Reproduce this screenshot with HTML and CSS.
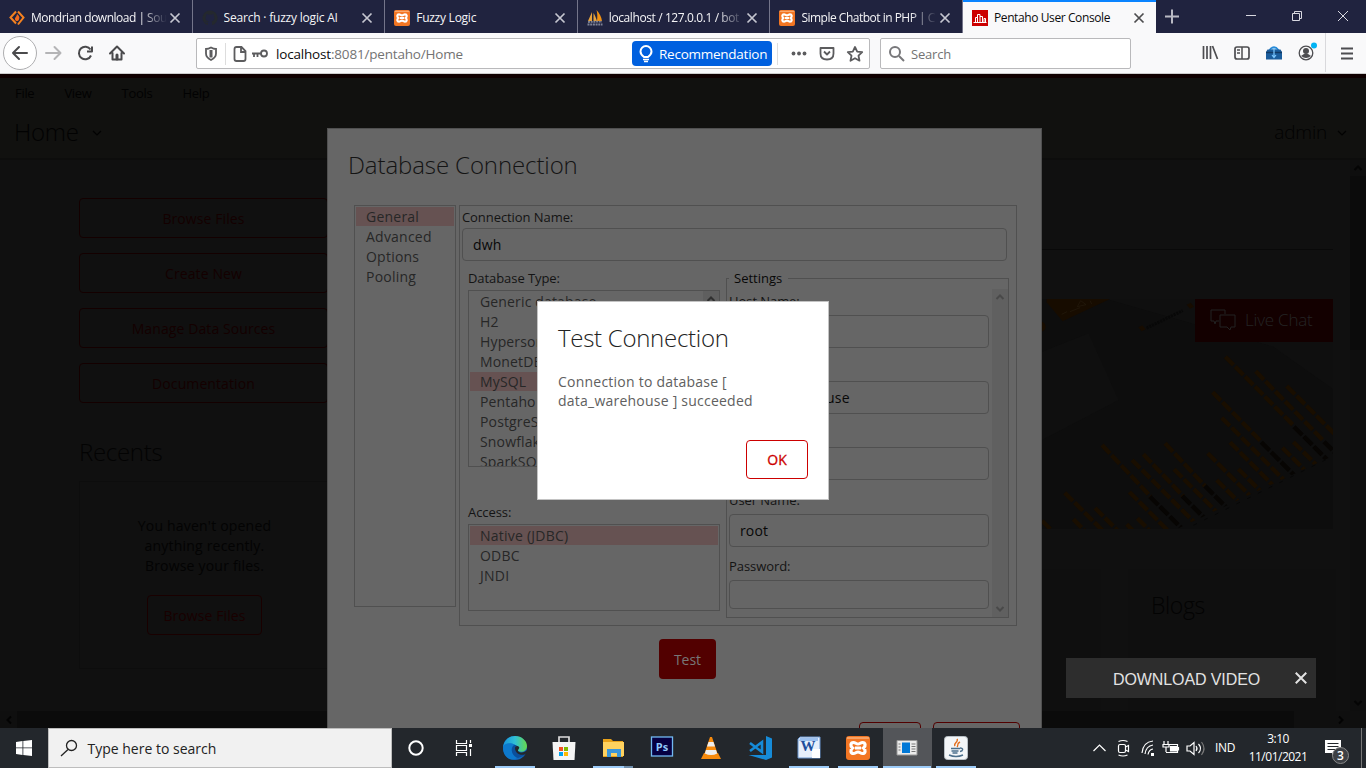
FILE: index.html
```html
<!DOCTYPE html>
<html lang="en">
<head>
<meta charset="utf-8">
<title>Pentaho User Console</title>
<link rel="stylesheet" href="styles.css">
</head>
<body>
<svg class="defs" width="0" height="0">
  <symbol id="close" viewBox="0 0 12 12"><path d="M1.5 1.5l9 9M10.5 1.5l-9 9" fill="none" stroke="currentColor" stroke-width="1.7"/></symbol>
  <symbol id="xampp" viewBox="0 0 24 24"><rect width="24" height="24" rx="3" fill="#f37623"/><path d="M1 2h22" stroke="#f9b27d" stroke-width="1.5"/><path d="M7.5 6.5c-3 0-3.5 3.500-1 5.500-2.500 2-2 5.500 1 5.500 2 0 2.500-1.500 4.500-1.500s2.500 1.500 4.500 1.500c3 0 3.500-3.500 1-5.500 2.500-2 2-5.500-1-5.500-2 0-2.500 1.500-4.500 1.500S9.500 6.500 7.500 6.500z" fill="none" stroke="#fff" stroke-width="3.2"/><path d="M9 12h6" stroke="#fff" stroke-width="3"/></symbol>
  <symbol id="up" viewBox="0 0 10 8"><path d="M1.500 6L5 2.500 8.500 6" fill="none" stroke="currentColor" stroke-width="2"/></symbol>
  <symbol id="down" viewBox="0 0 10 8"><path d="M1.500 2L5 5.500 8.500 2" fill="none" stroke="currentColor" stroke-width="2"/></symbol>
  <symbol id="thin" viewBox="0 0 10 8"><path d="M1 2L5 6 9 2" fill="none" stroke="currentColor" stroke-width="1.200"/></symbol>
</svg>

<div class="tabs">
  <div class="tab">
    <svg class="fav" viewBox="0 0 16 16"><path d="M7 1.500L1.500 7.500 7 13.500M9 1.500l5.500 6L9 14.500" fill="none" stroke="#f58220" stroke-width="2"/><path d="M8 4c2 2 3 3 2 5.500-1 2-3 2-4 0-.500-2 1.500-2 2-5.500z" fill="#f26b1d"/></svg>
    <span class="tab-title fade t1">Mondrian download | Sou</span><svg class="x"><use href="#close"/></svg>
  </div>
  <div class="tab">
    <svg class="fav" viewBox="0 0 16 16"><path d="M8 .5a7.500 7.500 0 0 0-2.500 14.600c.5 0 .5-.2.5-.5v-1.500c-2 .4-2.500-1-2.800-1.500.8-.2 1.500 1.300 2.800.8.1-.5.300-.8.500-1C4.500 11 3.500 10 3.500 8c0-1 .3-1.600.8-2.100-.1-.500-.2-1 .1-1.900.9 0 1.600.6 2 .8 1-.300 2.200-.3 3.200 0 .4-.2 1.100-.8 2-.8.3.900.2 1.400.1 1.900.5.5.8 1.100.8 2.100 0 2-1 3-3 3.400.4.300.5.800.5 1.500v1.700c0 .3 0 .5.500.5A7.500 7.500 0 0 0 8 .5z" fill="#24282e"/></svg>
    <span class="tab-title t2">Search · fuzzy logic AI</span><svg class="x"><use href="#close"/></svg>
  </div>
  <div class="tab">
    <svg class="fav"><use href="#xampp"/></svg>
    <span class="tab-title t3">Fuzzy Logic</span><svg class="x"><use href="#close"/></svg>
  </div>
  <div class="tab">
    <svg class="fav" viewBox="0 0 16 16"><path d="M5 2L1 11h4zM6.500 3v8h3.500C9 8 8 5 6.500 3z" fill="#e8a33c"/><path d="M9.500 0c3 3 5 7 5.500 11h-5C10.500 7 10.500 3 9.500 0z" fill="#f29111"/><path d="M1 12l14-.5M.5 14.500h15" stroke="#7d8296" stroke-width="1.800" stroke-dasharray="2 .7"/></svg>
    <span class="tab-title fade t4">localhost / 127.0.0.1 / bot</span><svg class="x"><use href="#close"/></svg>
  </div>
  <div class="tab">
    <svg class="fav"><use href="#xampp"/></svg>
    <span class="tab-title fade t5">Simple Chatbot in PHP | C</span><svg class="x"><use href="#close"/></svg>
  </div>
  <div class="tab active">
    <svg class="fav" viewBox="0 0 16 16"><rect width="16" height="18" fill="#c00"/><path d="M1.500 12.500h13M3.500 12V7.500h2V12M5.500 12V4.500h2.500V12M8 6.500h2.500V12M12 12V8.500h1.500V12" fill="none" stroke="#fff"/></svg>
    <span class="tab-title t6">Pentaho User Console</span><svg class="x"><use href="#close"/></svg>
  </div>
  <svg class="winctl" viewBox="0 0 210 33"><g fill="none" stroke="#d8d8e0"><path d="M9 16.500h14M16 9.500v14" stroke-width="2" stroke="#b9bac4"/><path d="M90 15.500h10M136.500 13.500h7v7h-7zM138.500 13v-1.500h7v7H144M182 11l10 10M192 11l-10 10"/></g></svg>
</div>

<div class="toolbar">
  <div class="nav">
    <svg width="130" height="40" viewBox="0 0 130 40">
      <circle cx="20" cy="20" r="16.500" fill="#fff" stroke="#aeaeb0"/>
      <g fill="none" stroke="#4a4a4c" stroke-width="2" stroke-linejoin="round" stroke-linecap="round">
        <path d="M27 20H13M19 14l-6 6 6 6"/>
        <path d="M46 20h14M54.500 14l6 6-6 6" stroke="#b4b4b6"/>
        <path d="M90.500 16.500A6.300 6.300 0 1 0 91 22.500M92 13.500v5h-5" stroke-linecap="butt"/>
        <path d="M110 20.500l7-7 7 7M112.500 20v6.500h9V20"/><path d="M117 26v-4" stroke-width="3"/>
      </g>
    </svg>
  </div>
  <div class="urlbar">
    <svg class="urlicons" viewBox="0 0 78 28">
      <g fill="none" stroke="#5c5c5e" stroke-width="1.800">
        <path d="M9 9q2.500 0 5-1.500 2.500 1.500 5 1.500v4.500q0 4-5 6.500-5-2.500-5-6.500z"/><path d="M14 10v7.500" stroke-width="3"/>
        <path d="M28.500 3v22" stroke="#ddd" stroke-width="1"/>
        <path d="M37.500 9q0-2 2-2h5l4 4v8q0 2-2 2h-7q-2 0-2-2zM44 7.500v4.500h4.500"/>
        <circle cx="67" cy="13.500" r="3"/><path d="M64 13.500h-9M57 14v3M60.500 14v3"/>
      </g>
    </svg>
    <span class="url"><b>localhost</b>:8081/pentaho/Home</span>
    <div class="rec"><svg width="16" height="18" viewBox="0 0 16 18"><path d="M6 12Q2.500 9.500 2.500 6.500a5.500 5.500 0 0 1 11 0q0 3-3.500 5.500z" fill="none" stroke="#fff" stroke-width="2"/><path d="M5 14.500h6M6 16.500h4" stroke="#fff" stroke-width="1.500"/></svg><span>Recommendation</span></div>
    <svg class="acts" viewBox="-1 0 97 28">
      <path d="M4.500 3v22" stroke="#ddd"/>
      <g fill="#5c5c5e"><circle cx="20.500" cy="13.500" r="1.900"/><circle cx="26" cy="13.500" r="1.900"/><circle cx="31.500" cy="13.500" r="1.900"/></g>
      <g fill="none" stroke="#5c5c5e" stroke-width="1.800" stroke-linejoin="round"><path d="M47.500 8h13v5.500q0 6-6.500 6t-6.500-6zM51 11.500l3 3 3-3"/><path d="M82 7l2.200 4.600 5 .6-3.700 3.500 1 5-4.500-2.500-4.500 2.500 1-5-3.700-3.500 5-.6z"/></g>
    </svg>
  </div>
  <div class="search">
    <svg width="18" height="18" viewBox="0 0 18 18"><circle cx="7" cy="7" r="5" fill="none" stroke="#77777a" stroke-width="2"/><path d="M11 11l5 5" stroke="#77777a" stroke-width="2"/></svg><span>Search</span>
  </div>
  <svg class="right" viewBox="0 0 166 40">
    <g fill="none" stroke="#4d4d50" stroke-width="1.700">
      <path d="M3.500 13v13M7 13v13M10.500 13v13M12.500 13l5 13"/>
      <rect x="35" y="14" width="14" height="12" rx="2"/><path d="M42 14v12M37 17h3M37 20h3" stroke-width="1.500"/>
      <circle cx="106" cy="20" r="6.800" stroke-width="1.300"/>
      <path d="M141 15.500h12M141 20.500h12M141 25.500h12" stroke-width="2"/>
    </g>
    <circle cx="106" cy="18" r="3" fill="#4d4d50"/><path d="M101 23q5-5 10 0-5 4-10 0z" fill="#4d4d50"/><circle cx="114" cy="12.500" r="3" fill="#00b3f4"/>
    <path d="M125.500 0v39" stroke="#d9d9dc"/>
    <path d="M69.500 17q4.500-6 9 0" fill="#8cc4ee" stroke="#2389d8" stroke-width="1.500"/><path d="M67.500 16.500h13l1.500 2.500v7.500H66V19z" fill="#1b5d9c"/><path d="M66 19.500h16" stroke="#123a64" stroke-width="1.500"/><path d="M74 16v8M72 22l2 2.500 2-2.500" fill="none" stroke="#7cc8ff" stroke-width="1.200"/>
  </svg>
</div>

<main class="page">
  <header class="head">
    <nav class="menu"><span>File</span><span>View</span><span>Tools</span><span>Help</span></nav>
    <div class="persp"><span class="home">Home</span><svg class="chev"><use href="#thin"/></svg><span class="admin">admin</span><svg class="chev"><use href="#thin"/></svg></div>
  </header>
  <div class="content">
    <aside class="left">
      <div class="obtn">Browse Files</div><div class="obtn">Create New</div><div class="obtn">Manage Data Sources</div><div class="obtn">Documentation</div>
      <h2 class="h">Recents</h2>
      <div class="recents"><p>You haven't opened<br>anything recently.<br>Browse your files.</p><div class="obtn small">Browse Files</div></div>
      <h2 class="h favs">Favorites</h2>
    </aside>
    <section class="info">
      <div class="rule"></div>
      <div class="hero">
        <svg class="photo" viewBox="66 507 873 690">
          <defs><clipPath id="base"><path d="M66 507h873v470L470 1197H66z"/></clipPath></defs>
          <path d="M66 507h873v270L760 650 260 507z" fill="#0f0f0f"/><path d="M66 665l140-55 90 200-230 120z" fill="#0f0f0f"/>
          <path d="M80 517v-10h190L128 574z" fill="#170c00"/><circle cx="62" cy="590" r="15" fill="#170c00"/>
          <path d="M125 553l16-8M150 545l30-12M172 530l10-18 16 12zM210 512l5 10" stroke="#241b0d" stroke-width="2" fill="none"/>
          <path d="M355 592l12-6 10 12-12 6zM500 524l12-6 10 12-12 6z" fill="#170c00"/>
          <path d="M380 594l108-52" stroke="#080808" stroke-width="9" stroke-dasharray="6 3"/>
          <g clip-path="url(#base)" stroke="#190e00" stroke-width="13" stroke-dasharray="35 7">
            <path d="M616 680l206 208M707 724l205 210M800 768l160 160M578 787l148 150M605 863l250 250M630 937l200 200M246 945l146 155M336 990l220 220M370 973l120 126M328 1086l160 160M435 940l120 128M462 1018l180 180M563 970l180 180M590 1050l120 120M655 1017l120 120M787 953l120 120M820 936l90 90M134 1088l120 120M225 1134l80 80M160 1168l40 40M320 1183l30 30M352 1165l60 60M66 1172l30 30"/>
            <path d="M822 890l110 110M912 935l40 40M724 937l110 110M390 1100l110 110M487 1098l90 90M555 1068l90 90" stroke="#070503"/>
          </g>
          <path d="M520 1186L930 983" stroke="#070707" stroke-width="3" stroke-dasharray="12 24"/>
        </svg>
        <div class="chat"><svg width="26" height="22" viewBox="0 0 26 22"><path d="M9 12H6l-1 3-1-3H1V1h14v4M10 6h15v12h-4l-1 3-3-3h-7z" fill="none" stroke="#222"/></svg><span>Live Chat</span></div>
      </div>
      <div class="cards"><div class="card"></div><div class="card"><h2 class="h">Blogs</h2></div></div>
    </section>
    <div class="vbar"><svg class="arr"><use href="#up"/></svg><div class="thumb"></div><svg class="arr"><use href="#down"/></svg></div>
  </div>
  <div class="hbar"><svg class="arr l"><use href="#up"/></svg><div class="hthumb"></div><svg class="arr r"><use href="#up"/></svg></div>

  <section class="dialog">
    <h1 class="title">Database Connection</h1>
    <div class="cols">
      <div class="list side"><div class="row sel">General</div><div class="row">Advanced</div><div class="row">Options</div><div class="row">Pooling</div></div>
      <div class="panel">
        <div class="lab">Connection Name:</div>
        <div class="field name">dwh</div>
        <div class="split">
          <div class="types">
            <div class="lab">Database Type:</div>
            <div class="list db"><div class="row">Generic database</div><div class="row">H2</div><div class="row">Hypersonic</div><div class="row">MonetDB</div><div class="row sel">MySQL</div><div class="row">Pentaho</div><div class="row">PostgreSQL</div><div class="row">Snowflake</div><div class="row">SparkSQL</div><div class="lbar"><svg class="arr"><use href="#up"/></svg></div></div>
            <div class="lab acc">Access:</div>
            <div class="list access"><div class="row sel">Native (JDBC)</div><div class="row">ODBC</div><div class="row">JNDI</div></div>
          </div>
          <fieldset class="settings">
            <legend>Settings</legend>
            <div class="fields">
              <div class="lab">Host Name:</div><div class="field"></div>
              <div class="lab"></div><div class="field">data_warehouse</div>
              <div class="lab"></div><div class="field port"></div>
              <div class="lab">User Name:</div><div class="field">root</div>
              <div class="lab">Password:</div><div class="field pw"></div>
            </div>
            <div class="sbar"><svg class="arr"><use href="#up"/></svg><svg class="arr"><use href="#down"/></svg></div>
          </fieldset>
        </div>
      </div>
    </div>
    <div class="test">Test</div>
    <div class="foot"><div class="fb"></div><div class="fb wide"></div></div>
  </section>

  <section class="modal">
    <h1 class="title">Test Connection</h1>
    <p>Connection to database [<br>data_warehouse ] succeeded</p>
    <div class="ok">OK</div>
  </section>

  <div class="download"><span>DOWNLOAD VIDEO</span><svg class="dx"><use href="#close"/></svg></div>
</main>

<footer class="taskbar">
  <div class="start"><svg width="16" height="16" viewBox="0 0 16 16"><path d="M0 2l6.500-1v6.500H0zM7.300 1L16 0v7.500H7.300zM0 8.300h6.500V15L0 14zM7.300 8.300H16V16l-8.700-1z" fill="#fff"/></svg></div>
  <div class="tsearch"><svg width="18" height="18" viewBox="0 0 18 18"><circle cx="11.500" cy="6.500" r="5" fill="none" stroke="#222" stroke-width="1.300"/><path d="M8 10.500L1 17" stroke="#222" stroke-width="1.300"/></svg><span>Type here to search</span></div>
  <div class="app c48"><svg viewBox="0 0 24 24"><circle cx="12" cy="12" r="6.700" fill="none" stroke="#fff" stroke-width="2"/></svg></div>
  <div class="app c48"><svg viewBox="0 0 24 24"><path d="M4.500 4v3.500h10V4M4.500 20v-3.500h10V20M4.500 9.500h10v5h-10zM18.500 4v3M18.500 13v7" fill="none" stroke="#fff" stroke-width="1.200"/><path d="M17 8h3v3h-3z" fill="#fff"/></svg></div>
  <div class="app run edge"><svg viewBox="0 0 24 24"><defs><linearGradient id="eg" x2="1"><stop stop-color="#1793dc"/><stop offset=".5" stop-color="#30bfd5"/><stop offset="1" stop-color="#66d94b"/></linearGradient></defs><circle cx="12" cy="12" r="12" fill="#1167bd"/><path d="M0 11C1 4 6 0 12 0c7 0 12 5 12 10 0 5-5 7-9 5 1-7-8-10-15-4z" fill="url(#eg)"/><path d="M0 12c0-5 8-6 12-3-4 1-5 9 2 13-8 5-14-3-14-10z" fill="#0d79cd"/><path d="M11 9c-5 4-1 12 4 13 4-1 7-3 8-5-7 2-11 0-8-4 1-2-1-4-4-4z" fill="#0b4f9b"/><path d="M12 12c0-2 3-3 4-1 1 1-1 2-1 4 3 3 7 1 9-1v3c-5 4-12 1-12-5z" fill="#23272c"/></svg></div>
  <div class="app"><svg viewBox="0 0 24 24"><path d="M7 7V1h10v6" fill="none" stroke="#ddd" stroke-width="1.700"/><path d="M.5 6h23l-1 18h-21z" fill="#f5f5f5"/><path d="M7 11h4v4H7z" fill="#f25022"/><path d="M12 11h4v4h-4z" fill="#7fba00"/><path d="M7 16h4v4H7z" fill="#00a4ef"/><path d="M12 16h4v4h-4z" fill="#ffb900"/></svg></div>
  <div class="app run multi"><svg viewBox="0 0 24 24"><path d="M2 3h8l2 2h10v16H2z" fill="#e9a21a"/><path d="M2 6h21v14H2z" fill="#ffd25f"/><path d="M6 21v-8h14v8h-4v-4h-6v4z" fill="#3b96d9"/></svg></div>
  <div class="app"><svg viewBox="0 0 24 24"><rect x="1.500" y="1" width="21" height="19" fill="#060042" stroke="#72b9f2" stroke-width="1.300"/><text x="12" y="15" text-anchor="middle" class="ps">Ps</text></svg></div>
  <div class="app"><svg viewBox="0 0 24 24"><path d="M5 17h14l3 6H2z" fill="#f78a0c"/><path d="M11 1h2l6 18q-7 4-14 0z" fill="#f78a0c"/><path d="M9.500 6h5l1.500 4.500H8zM7 14h10l1.200 3.500q-6 3-12.400 0z" fill="#eee"/></svg></div>
  <div class="app"><svg viewBox="0 0 24 24"><path d="M18 0l6 2.500v19L18 24 .5 19H18z" fill="#168bd8"/><path d="M2 7l12 9V6L2 15" fill="none" stroke="#168bd8" stroke-width="2.600"/></svg></div>
  <div class="app run"><svg viewBox="0 0 24 24"><path d="M3 1h20v21H1V3z" fill="#e6effb" stroke="#6a96cf"/><path d="M3 2h18v3H2z" fill="#9cc0ee"/><path d="M15 13h8v9h-8z" fill="#fff"/><text x="11" y="15" text-anchor="middle" class="wd">W</text></svg></div>
  <div class="app run"><svg><use href="#xampp"/></svg></div>
  <div class="app run on"><svg viewBox="0 0 24 24"><path d="M2 4.500h20v14.500H2z" fill="#ececec" stroke="#999"/><path d="M7 6.500h8V17H7z" fill="#0078d7"/><path d="M3.500 8h2M3.500 11h2M3.500 14h2M16.500 8h4M16.500 10.500h4M16.500 13h4M16.500 15.500h4" stroke="#777"/></svg></div>
  <div class="app run"><svg viewBox="0 0 24 24"><rect x=".5" y=".5" width="23" height="23" rx="3" fill="#f3f6f8" stroke="#b8c0c6"/><path d="M13 3c2 3-4 4-2 7M16 6c-4 2-1 3-3 5" fill="none" stroke="#e4701e" stroke-width="1.400"/><path d="M7 12.500h9M7.500 15h7M8.500 17h5M16 12c4 0 3 3 0 3.500M5 19q7 3 14 0" fill="none" stroke="#4c708c" stroke-width="1.400"/></svg></div>
  <svg class="tray" viewBox="0 0 120 40"><g fill="none" stroke="#fff" stroke-width="1.200">
    <path d="M5.500 23l6-6 6 6"/><rect x="30.500" y="16.500" width="7" height="8" rx="1.500"/><path d="M37.500 19l3-1.500v6L37.500 22M30.500 13.500q4.500-2 9 0M30.500 27q4.500 2 9 0"/>
    <path d="M54 25q1-11 11-12M57 26q1-8 8-9M60 26.500q1-5 5-5.500"/><path d="M63 26.500h3" stroke-width="3"/>
    <path d="M79.500 16.500h10v8H78M90.500 19v3.500M76 13v3M80 13v3M75 16.500h6v2.500h-6zM78 19v5"/><path d="M82.500 18.500h6V23h-6z" fill="#fff"/>
    <path d="M99 18h3l4-3.500v12L102 23h-3zM108 18q2 2.500 0 5M110.500 16q4 4.500 0 9"/><path d="M113.500 14q5 6.500 0 13" stroke="#777"/></g></svg>
  <span class="ind">IND</span>
  <div class="clock"><span>3:10</span><span>11/01/2021</span></div>
  <svg class="note" viewBox="0 0 32 40"><path d="M3 12h16v13h-6l-3 3v-3H3z" fill="#fff"/><path d="M5.500 15.500h11M5.500 18.500h11M5.500 21.500h8" stroke="#23272c"/><circle cx="18.500" cy="27.500" r="8" fill="#3d4045" stroke="#888"/><text x="18.500" y="32" text-anchor="middle" class="cnt">3</text></svg>
  <div class="peek"></div>
</footer>
</body>
</html>
```

FILE: styles.css
```css
* { box-sizing: border-box; }
body { margin: 0; width: 1366px; height: 768px; overflow: hidden; display: flex; flex-direction: column; font-family: "Open Sans", "Noto Sans", sans-serif; background: #101010; }
h1, h2, p { margin: 0; font-weight: 300; }
svg { display: block; flex: none; }
.defs { position: absolute; }

/* browser tabs */
.tabs { height: 33px; flex: none; display: flex; background: #20233f; color: #f4f4f6; }
.tab { width: 192.600px; height: 33px; flex: none; display: flex; align-items: center; padding: 2px 11px 0 9px; border-right: 1px solid #74758a; }
.fav { width: 16px; height: 16px; margin-right: 6px; }
.tab-title { flex: 1; min-width: 0; overflow: hidden; white-space: nowrap; font-size: 12px; line-height: 18px; }
.t1, .t5 { letter-spacing: -.5px; }
.t2 { letter-spacing: -.2px; }
.t3 { letter-spacing: -.25px; }
.t4, .t6 { letter-spacing: -.4px; }
.fade { -webkit-mask-image: linear-gradient(90deg, #000 80%, transparent 100%); mask-image: linear-gradient(90deg, #000 80%, transparent 100%); }
.x { width: 12px; height: 12px; color: #c5c6d0; margin-left: 2px; }
.tab.active { background: #f9f9fa; color: #0c0c0d; border-right: 0; border-top: 2px solid #0a84ff; padding-top: 0; }
.active .x { color: #4d4d4f; }
.winctl { width: 210px; height: 33px; }

/* browser toolbar */
.toolbar { height: 41px; flex: none; display: flex; align-items: flex-start; background: #f9f9fa; border-bottom: 1px solid #ccc; }
.nav { width: 196px; }
.urlbar { width: 674px; height: 31px; margin-top: 5px; display: flex; align-items: center; background: #fff; border: 1px solid #b9b9bb; border-radius: 2px; font-size: 14px; color: #737373; }
.urlicons { width: 78px; height: 28px; }
.url { width: 357px; padding-left: 1px; white-space: nowrap; font-size: 13.500px; letter-spacing: -.18px; }
.url b { font-weight: 400; color: #0c0c0d; }
.rec { width: 140px; height: 25px; display: flex; align-items: center; gap: 5px; padding-left: 6px; border-radius: 4px; background: #0060df; color: #fff; font-size: 13.500px; letter-spacing: -.25px; }
.acts { width: 97px; height: 28px; }
.search { width: 251px; height: 31px; margin: 5px 0 0 10px; display: flex; align-items: center; gap: 5px; padding-left: 7px; background: #fff; border: 1px solid #b9b9bb; border-radius: 2px; color: #737373; font-size: 13px; letter-spacing: -.2px; }
.right { width: 166px; height: 40px; margin-left: 69px; }

/* dimmed console */
.page { position: relative; flex: 1; overflow: hidden; background: #101010; }
.head { height: 86px; border-top: 4px solid #100000; border-bottom: 2px solid #0d0d0c; background: #11110f; color: #020202; }
.menu { display: flex; gap: 30px; padding: 6px 15px 0; font-size: 13px; line-height: 18px; letter-spacing: -.3px; }
.persp { display: flex; align-items: center; padding: 12px 19px 0 14px; font-size: 24px; font-weight: 300; line-height: 36px; }
.home { letter-spacing: -.3px; }
.chev { width: 10px; height: 8px; margin-left: 13px; }
.persp .chev { margin-top: 1px; }
.admin { margin-left: auto; font-size: 19px; letter-spacing: -.2px; }
.admin + .chev { margin-left: 10px; }
.content { display: flex; height: 551px; overflow: hidden; }
.left { width: 249px; margin: 38px 0 0 79px; flex: none; color: #030303; }
.obtn { height: 40px; margin-bottom: 15px; display: flex; align-items: center; justify-content: center; border: 1px solid #140000; border-radius: 4px; color: #140000; font-size: 14px; letter-spacing: .1px; }
.h { font-size: 24px; line-height: 34px; letter-spacing: -.3px; }
.left .h { margin-top: 32px; }
.recents { height: 188px; margin-top: 12px; padding: 34px 0 0 2px; display: flex; flex-direction: column; align-items: center; gap: 19px; border: 1px solid #0d0d0d; text-align: center; }
.recents p { font-weight: 400; font-size: 14px; line-height: 20px; letter-spacing: .2px; }
.small { width: 115px; color: #190000; border-color: #190000; }
.left .favs { margin-top: 34px; }
.info { flex: 1; margin-left: 714px; }
.rule { height: 1px; margin: 89px 17px 0 0; background: #090909; }
.hero { position: relative; width: 291px; height: 230px; margin-top: 49px; background: #0d0d0d; }
.photo { width: 291px; height: 230px; }
.chat { position: absolute; right: 0; top: 0; width: 138px; height: 43px; display: flex; align-items: center; gap: 9px; padding: 0 0 2px 15px; background: #130000; color: #242424; font-size: 17px; font-weight: 300; letter-spacing: -.2px; }
.cards { display: flex; gap: 27px; margin-top: 40px; }
.card { width: 59px; height: 150px; background: #0f0f0f; }
.card + .card { width: 208px; padding: 19px 23px; color: #030303; }
.card .h { font-size: 23px; letter-spacing: -.4px; }
.vbar { width: 16px; flex: none; display: flex; flex-direction: column; align-items: center; padding: 4px 0; background: #0e0e0e; color: #040404; }
.arr { width: 10px; height: 8px; }
.thumb { width: 16px; height: 174px; margin: 4px 0 auto; background: #0b0b0b; }
.hbar { height: 17px; display: flex; align-items: center; padding: 0 20px 0 4px; background: #0f0f0f; color: #030303; }
.hthumb { width: 1277px; height: 17px; margin: 0 auto 0 3px; background: #0b0b0b; }
.l { transform: rotate(-90deg); }
.r { transform: rotate(90deg); }

/* database connection dialog */
.dialog { position: absolute; left: 327px; top: 54px; width: 715px; height: 640px; padding: 18px 24px 0 20px; border: 1px solid #505050; background: #666; color: #141414; }
.title { font-size: 24px; line-height: 36px; white-space: nowrap; letter-spacing: -.1px; }
.cols { display: flex; gap: 3px; margin: 22px 0 0 6px; }
.list { padding: 1px; border: 1px solid #505050; color: #272727; font-size: 14px; letter-spacing: .23px; overflow: hidden; }
.row { height: 19px; margin-bottom: 1px; padding-left: 10px; line-height: 20px; white-space: nowrap; }
.sel { background: #665252; }
.side { width: 102px; height: 402px; flex: none; }
.panel { width: 558px; height: 421px; flex: none; padding: 3px 8px 0 2px; border: 1px solid #505050; }
.lab { height: 18px; font-size: 13px; line-height: 17px; white-space: nowrap; letter-spacing: -.07px; }
.field { width: 260px; height: 33px; padding-left: 10px; border: 1px solid #505050; border-radius: 4px; font-size: 14px; line-height: 31px; letter-spacing: .15px; color: #080808; }
.name { width: 545px; margin-top: 1px; }
.split { display: flex; gap: 6px; padding: 9px 0 0 6px; }
.types { width: 252px; flex: none; }
.db { position: relative; height: 177px; margin-top: 2px; letter-spacing: .15px; }
.lbar { position: absolute; right: 0; top: 0; width: 16px; height: 175px; padding: 4px 3px; background: #5f5f5f; color: #303030; }
.acc { margin-top: 37px; }
.access { height: 87px; margin-top: 2px; }
.settings { width: 283px; height: 349px; flex: none; margin: -1px 0 0; padding: 0 0 0 2px; border: 1px solid #505050; display: flex; }
.settings legend { margin-left: 0; padding: 0 6px 0 5px; font-size: 13px; line-height: 18px; color: #080808; }
.fields { width: 263px; padding-top: 6px; }
.fields .lab { height: 22px; }
.fields .field { margin-bottom: 11px; }
.fields .port { margin-bottom: 12px; }
.fields .pw { height: 29px; }
.sbar { width: 16px; height: 328px; margin-top: 2px; padding: 4px 3px; display: flex; flex-direction: column; justify-content: space-between; background: #606060; color: #494949; }
.test { width: 57px; height: 40px; margin: 13px 0 0 311px; border-radius: 4px; background: #520000; color: #777; font-size: 14px; line-height: 41px; text-align: center; }
.foot { display: flex; gap: 12px; margin: 43px 0 0 511px; }
.fb { width: 62px; height: 39px; flex: none; border: 1px solid #520000; border-radius: 4px; }
.wide { width: 87px; }

/* result message */
.modal { position: absolute; left: 537px; top: 227px; width: 292px; height: 199px; padding: 18px 20px 20px; display: flex; flex-direction: column; border: 1px solid #c3c3c3; background: #fff; color: #222; }
.modal .title { letter-spacing: -.28px; }
.modal p { margin-top: 16px; font-size: 14px; font-weight: 400; line-height: 19px; letter-spacing: .23px; color: #606060; white-space: nowrap; }
.ok { width: 62px; height: 39px; margin: auto 0 0 auto; border: 1px solid #c00; border-radius: 4px; color: #c00; font-size: 14px; font-weight: 500; line-height: 37px; text-align: center; -webkit-text-stroke: .3px #c00; }
.download { position: absolute; left: 1066px; top: 584px; width: 250px; height: 40px; display: flex; align-items: center; padding-left: 47px; background: #2d2d2d; color: #e2e2e2; font-family: "Liberation Sans", Arial, sans-serif; font-size: 16px; letter-spacing: -.1px; }
.download span { width: 147px; white-space: nowrap; padding-top: 3px; }
.dx { width: 14px; height: 14px; margin-left: 34px; }

/* taskbar */
.taskbar { height: 40px; flex: none; display: flex; background: #23272c; color: #fff; }
.start { width: 48px; flex: none; padding: 12px 16px; }
.tsearch { width: 344px; height: 40px; flex: none; display: flex; align-items: center; gap: 9.500px; padding-left: 11px; border: 1px solid #bdbdbd; background: #f1f1f1; color: #222; font-size: 14px; }
.app { width: 49px; height: 40px; flex: none; display: flex; align-items: center; justify-content: center; }
.app svg { width: 24px; height: 24px; }
.c48 { width: 48px; }
.edge { margin-left: 2.500px; }
.run { background: linear-gradient(#9ccbf8, #9ccbf8) center bottom / 40px 2px no-repeat; }
.multi { background: linear-gradient(90deg, #9ccbf8 78%, #6f8eac 78%) center bottom / 40px 2px no-repeat; }
.on { background: linear-gradient(#9ccbf8, #9ccbf8) center bottom / 48px 2px no-repeat, #535559; }
.ps { font: 700 11px "Open Sans", sans-serif; fill: #8fc9fb; }
.wd { font: 700 15px "Liberation Serif", serif; fill: #1d4f9e; }
.tray { width: 120px; height: 40px; margin-left: 107.500px; }
.ind { width: 31px; flex: none; margin-left: 7px; line-height: 39px; font-size: 12px; letter-spacing: -.3px; }
.clock { width: 76px; flex: none; display: flex; flex-direction: column; align-items: center; padding-top: 2px; margin-left: -6px; font-size: 12px; line-height: 18px; letter-spacing: -.5px; }
.note { width: 32px; height: 40px; margin-left: 6px; }
.cnt { font: 600 12px "Open Sans", sans-serif; fill: #fff; }
.peek { width: 1px; flex: none; margin-left: 7px; background: #777; }
```
